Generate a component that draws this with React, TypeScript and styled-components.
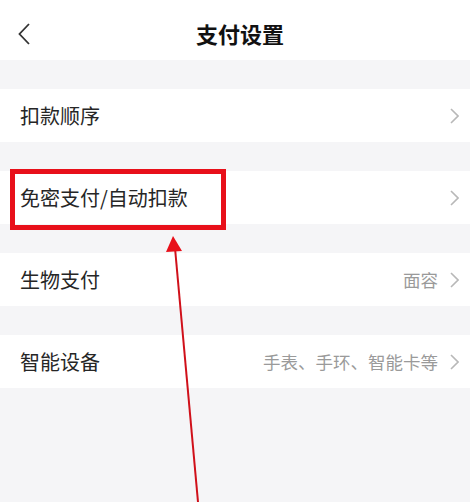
import React from "react";
import styled, { createGlobalStyle } from "styled-components";

const GlobalStyle = createGlobalStyle`
  html, body {
    margin: 0;
    padding: 0;
    background: #f5f5f7;
    font-family: "Noto Sans CJK SC", "Noto Sans", sans-serif;
  }
`;

type Item = { label: string; value?: string };

const groups: Item[] = [
  { label: "扣款顺序" },
  { label: "免密支付/自动扣款" },
  { label: "生物支付", value: "面容" },
  { label: "智能设备", value: "手表、手环、智能卡等" },
];

const Page = styled.div`
  position: relative;
  width: 470px;
  height: 502px;
  overflow: hidden;
  background: #f5f5f7;
`;

const NavBar = styled.div`
  height: 60px;
  background: #ffffff;
  display: flex;
  align-items: center;
  justify-content: center;
  position: relative;
`;

const BackButton = styled.div`
  position: absolute;
  left: 14px;
  top: 22px;
  width: 20px;
  height: 24px;
  display: flex;
  align-items: center;
  justify-content: center;
`;

const Title = styled.div`
  font-size: 22px;
  font-weight: 700;
  color: #111111;
  margin-left: 10px;
  margin-top: 6px;
`;

const List = styled.div`
  display: flex;
  flex-direction: column;
  gap: 29px;
  padding-top: 29px;
`;

const Row = styled.div`
  height: 53px;
  background: #ffffff;
  display: flex;
  align-items: center;
  padding: 0 11px 0 20px;
`;

const Label = styled.div`
  flex: 1;
  font-size: 20px;
  color: #262626;
`;

const Value = styled.div`
  font-size: 17.5px;
  color: #9a9a9a;
  margin-right: 12px;
`;

const Highlight = styled.div`
  position: absolute;
  left: 10px;
  top: 169px;
  width: 206px;
  height: 51px;
  border: 5px solid #e8101a;
`;

const ArrowLayer = styled.svg`
  position: absolute;
  left: 0;
  top: 0;
  pointer-events: none;
`;

const Chevron = () => (
  <svg width="9" height="16" viewBox="0 0 9 16">
    <path d="M1 1 L8 8 L1 15" fill="none" stroke="#b8b8b8" strokeWidth="1.6" />
  </svg>
);

export default function App() {
  return (
    <Page>
      <GlobalStyle />
      <NavBar>
        <BackButton>
          <svg width="12" height="22" viewBox="0 0 12 22">
            <path d="M11 1 L1.5 11 L11 21" fill="none" stroke="#333333" strokeWidth="1.8" />
          </svg>
        </BackButton>
        <Title>支付设置</Title>
      </NavBar>
      <List>
        {groups.map((g) => (
          <Row key={g.label}>
            <Label>{g.label}</Label>
            {g.value && <Value>{g.value}</Value>}
            <Chevron />
          </Row>
        ))}
      </List>
      <Highlight />
      <ArrowLayer width="470" height="502" viewBox="0 0 470 502">
        <line x1="175" y1="248" x2="198" y2="502" stroke="#d0101a" strokeWidth="2" />
        <polygon points="173,236 166,252 182,251" fill="#e8101a" />
      </ArrowLayer>
    </Page>
  );
}
